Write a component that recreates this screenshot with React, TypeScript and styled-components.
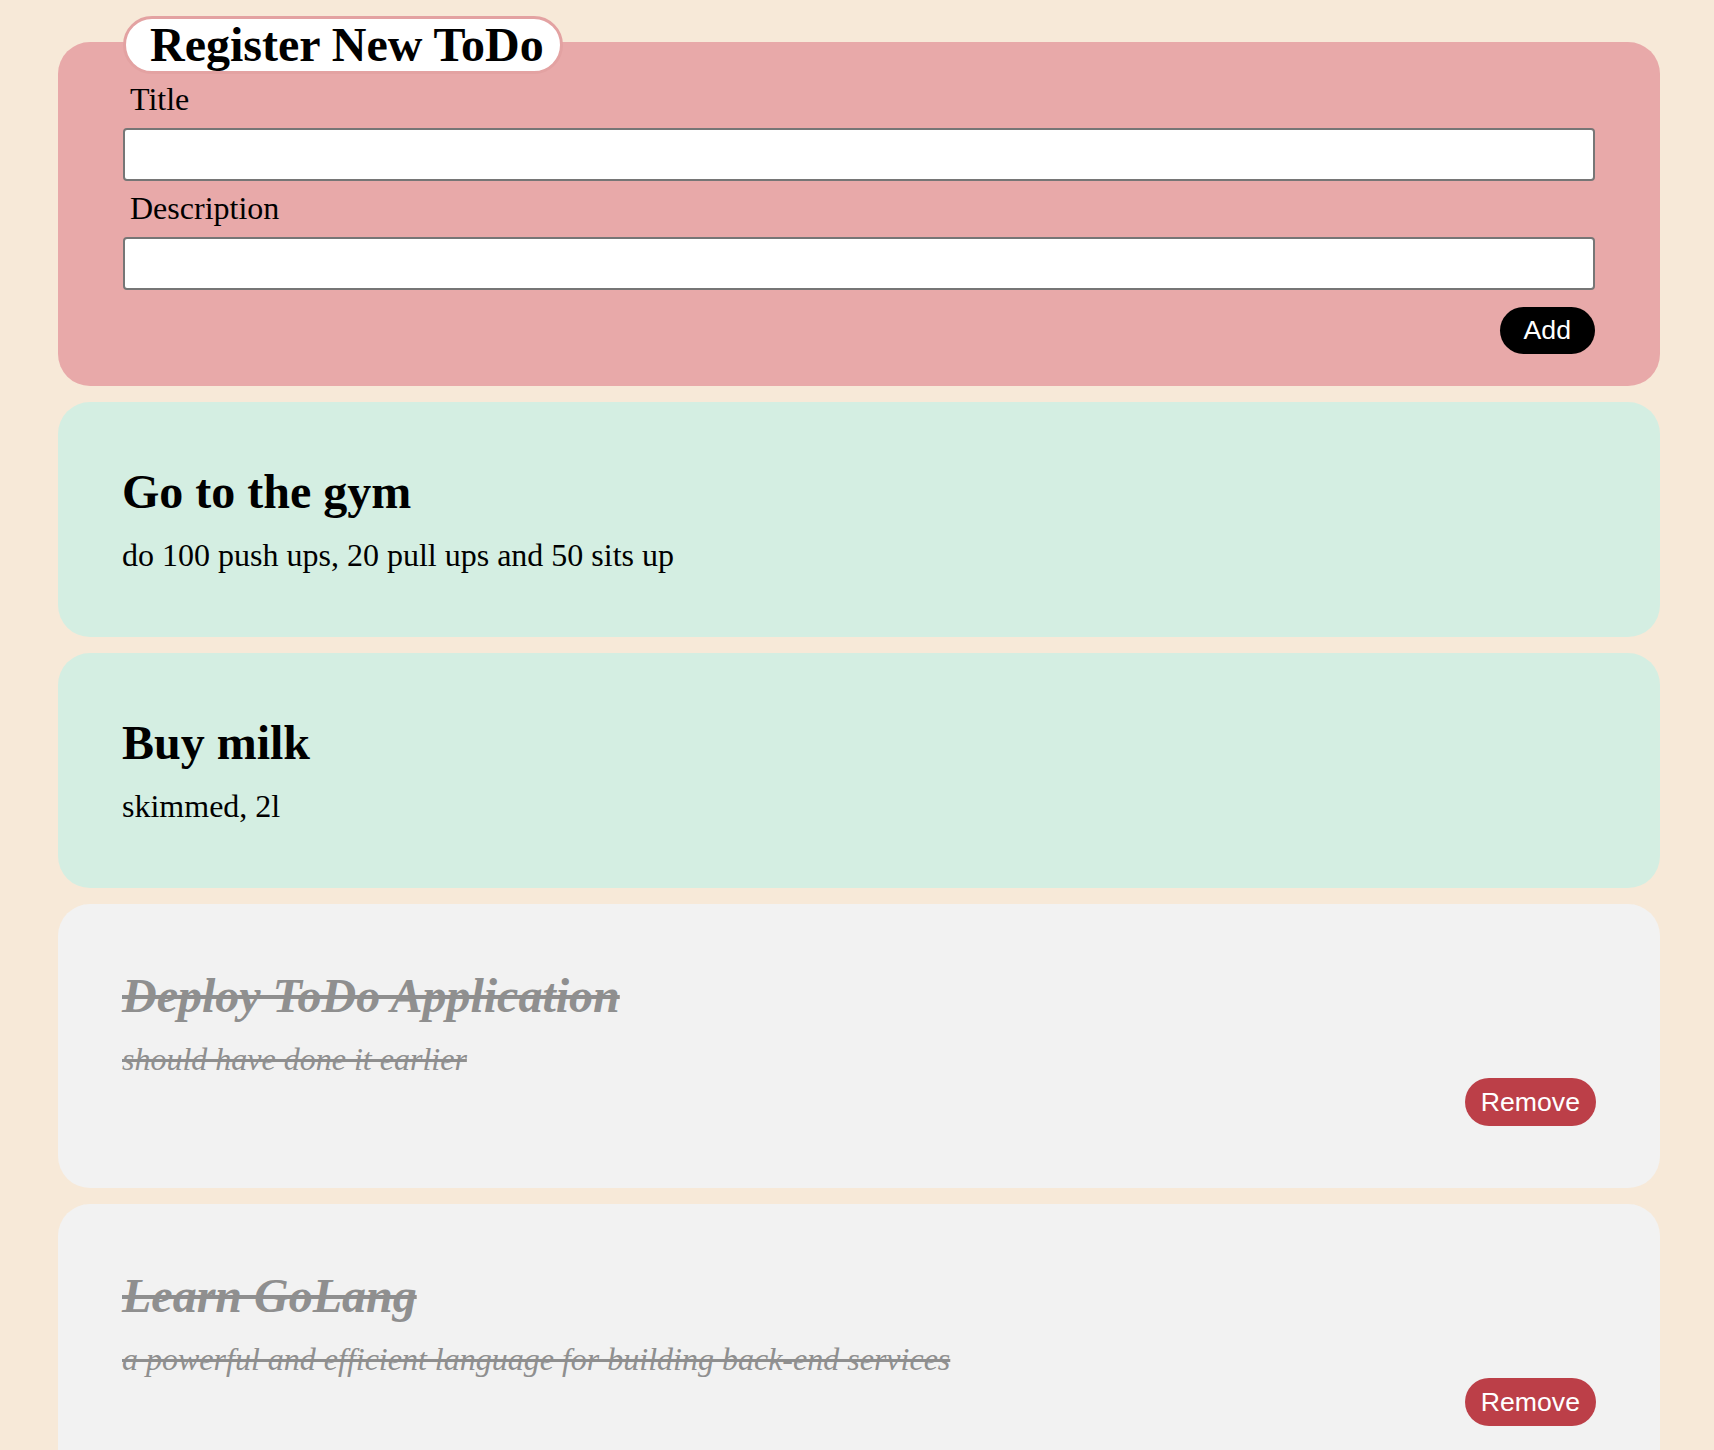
import React from "react";
import styled, { createGlobalStyle } from "styled-components";

const GlobalStyle = createGlobalStyle`
  html, body {
    margin: 0;
    padding: 0;
    background: #f7e9d8;
  }
  body {
    font-family: "Liberation Serif", "Times New Roman", serif;
    color: #000;
  }
  * { box-sizing: border-box; }
`;

const Page = styled.main`
  display: flex;
  flex-direction: column;
  gap: 16px;
  padding: 42px 54px 40px 58px;
`;

const FormCard = styled.section`
  display: flex;
  flex-direction: column;
  background: #e8a9a9;
  border-radius: 32px;
  padding: 0 65px 32px;
`;

const Legend = styled.h1`
  align-self: flex-start;
  display: flex;
  align-items: center;
  height: 58px;
  margin: -26px 0 0;
  padding: 0 16px 0 24px;
  background: #fff;
  border: 3px solid #e3a2a2;
  border-radius: 29px;
  font-size: 48px;
  font-weight: 700;
  line-height: 1;
`;

const Label = styled.label<{ $top: number }>`
  display: block;
  margin: ${(p) => p.$top}px 0 10px 7px;
  font-size: 32px;
  line-height: 37px;
`;

const Input = styled.input`
  display: block;
  width: 100%;
  height: 53px;
  border: 2px solid #767676;
  border-radius: 4px;
  background: #fff;
  font: inherit;
  font-size: 28px;
  padding: 0 8px;
`;

const Actions = styled.div<{ $top: number }>`
  display: flex;
  justify-content: flex-end;
  margin-top: ${(p) => p.$top}px;
`;

const PillButton = styled.button<{ $variant: "add" | "remove" }>`
  height: ${(p) => (p.$variant === "add" ? 47 : 48)}px;
  padding: 0 ${(p) => (p.$variant === "add" ? 24 : 16)}px;
  border: none;
  border-radius: 24px;
  background: ${(p) => (p.$variant === "add" ? "#000" : "#bc3f48")};
  color: #fff;
  font-family: "Liberation Sans", Arial, sans-serif;
  font-size: 26.67px;
  line-height: 1;
  cursor: pointer;
`;

const TodoCard = styled.article<{ $done: boolean }>`
  display: flex;
  flex-direction: column;
  background: ${(p) => (p.$done ? "#f2f2f2" : "#d4eee2")};
  border-radius: 32px;
  padding: ${(p) => (p.$done ? "64px 64px 62px" : "62px 64px 63px")};
  color: ${(p) => (p.$done ? "#8f8f8f" : "#000")};
`;

const TodoTitle = styled.h2<{ $done: boolean }>`
  margin: 0 0 18px;
  font-size: 48px;
  line-height: 55px;
  font-weight: 700;
  font-style: ${(p) => (p.$done ? "italic" : "normal")};
  text-decoration: ${(p) => (p.$done ? "line-through" : "none")};
`;

const TodoDesc = styled.p<{ $done: boolean }>`
  margin: 0;
  font-size: 32px;
  line-height: 37px;
  font-style: ${(p) => (p.$done ? "italic" : "normal")};
  text-decoration: ${(p) => (p.$done ? "line-through" : "none")};
`;

type Todo = { title: string; description: string; done: boolean };

const todos: Todo[] = [
  { title: "Go to the gym", description: "do 100 push ups, 20 pull ups and 50 sits up", done: false },
  { title: "Buy milk", description: "skimmed, 2l", done: false },
  { title: "Deploy ToDo Application", description: "should have done it earlier", done: true },
  {
    title: "Learn GoLang",
    description: "a powerful and efficient language for building back-end services",
    done: true,
  },
];

export default function App() {
  return (
    <>
      <GlobalStyle />
      <Page>
        <FormCard>
          <Legend>Register New ToDo</Legend>
          <Label $top={7} htmlFor="title">Title</Label>
          <Input id="title" type="text" />
          <Label $top={9} htmlFor="desc">Description</Label>
          <Input id="desc" type="text" />
          <Actions $top={17}>
            <PillButton $variant="add">Add</PillButton>
          </Actions>
        </FormCard>
        {todos.map((t) => (
          <TodoCard key={t.title} $done={t.done}>
            <TodoTitle $done={t.done}>{t.title}</TodoTitle>
            <TodoDesc $done={t.done}>{t.description}</TodoDesc>
            {t.done && (
              <Actions $top={0}>
                <PillButton $variant="remove">Remove</PillButton>
              </Actions>
            )}
          </TodoCard>
        ))}
      </Page>
    </>
  );
}
